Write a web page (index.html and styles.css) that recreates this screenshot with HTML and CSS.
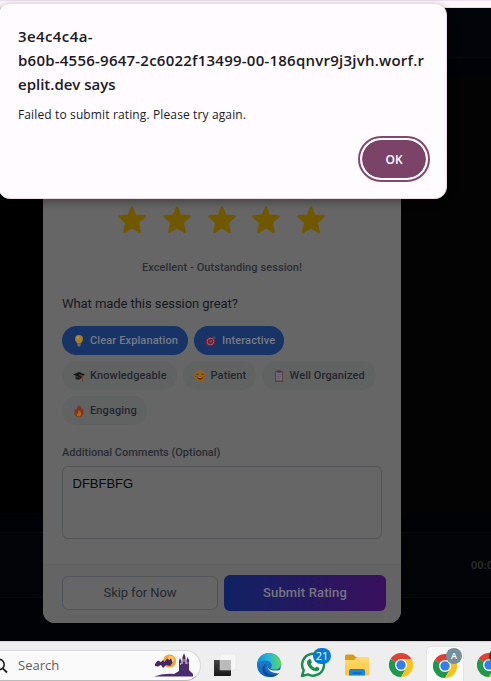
FILE: index.html
```html
<!DOCTYPE html>
<html lang="en">
<head>
<meta charset="utf-8">
<title>Session rating</title>
<link rel="stylesheet" href="styles.css">
</head>
<body>
<svg width="0" height="0" class="defs">
  <defs>
    <linearGradient id="edgeTop" x1="0" y1="0" x2="1" y2="0"><stop offset="0" stop-color="#168bd5"/><stop offset=".5" stop-color="#27b8dc"/><stop offset="1" stop-color="#60d850"/></linearGradient>
    <linearGradient id="edgeLow" x1="0" y1="0" x2="0" y2="1"><stop offset="0" stop-color="#1e88d8"/><stop offset="1" stop-color="#1261ba"/></linearGradient>
    <linearGradient id="folder" x1="0" y1="0" x2="0" y2="1"><stop offset="0" stop-color="#ffdb70"/><stop offset="1" stop-color="#fbc437"/></linearGradient>
    <linearGradient id="dark" x1="0" y1="0" x2="0" y2="1"><stop offset="0" stop-color="#444"/><stop offset="1" stop-color="#171917"/></linearGradient>
    <symbol id="star" viewBox="0 0 28 28"><path d="M14 1.600 17.200 9.800 26.400 10.400 19.500 16.500 21.600 25.700 14 21 6.400 25.700 8.500 16.500 1.600 10.400 10.800 9.800Z" fill="#705800" stroke="#705800" stroke-width="2.600" stroke-linejoin="round"/></symbol>
    <symbol id="chrome" viewBox="0 0 24 24">
      <path d="M12 12 1.600 6A12 12 0 0 1 22.400 6Z" fill="#df4034"/>
      <path d="M12 12 1.600 6A12 12 0 0 0 12 24L17.200 15Z" fill="#21974b"/>
      <path d="M12 6H22.400A12 12 0 0 1 12 24L17.200 15Z" fill="#fbc116"/>
      <circle cx="12" cy="12" r="6" fill="#fff"/><circle cx="12" cy="12" r="4.700" fill="#337ded"/>
    </symbol>
  </defs>
</svg>
<div class="desktop">
  <div class="browser-edge"></div>
  <main class="page">
    <div class="topbar"></div>
    <div class="subbar"></div>
    <div class="video"></div>
    <div class="video-foot"></div>
    <div class="controls"><span>00:00</span></div>
    <div class="page-foot"></div>
  </main>
  <footer class="taskbar">
    <div class="search">
      <svg class="glass" width="16" height="16" viewBox="0 0 16 16"><circle cx="6" cy="6.500" r="5.200" fill="none" stroke="#222" stroke-width="1.600"/><path d="M9.800 10.300 14 14.500" stroke="#222" stroke-width="1.900"/></svg>
      <span>Search</span>
      <svg class="castle" width="40" height="26" viewBox="0 0 40 26"><circle cx="15.500" cy="8" r="6.600" fill="#f5a536"/><circle cx="17" cy="6" r="3" fill="#ffc963"/><path d="M1 11 4 7.500 7 9 9 7 10.500 9 13 5.500 15.500 7 17 5 18.500 10 16 13 12 12 9 15 7 12 4 13.500 1 13Z" fill="#442765"/><path d="M0 23.500Q9 20 20 21L25 18V8L26 5 27.500 8V11H28.500V4L30 0 31.500 4V11H32.500V7L33.500 4 35 7V17L39 21V23.500Z" fill="#4a2b70"/><path d="M26 10h1v2h-1zM29.500 6h1v3h-1zM33.500 9h.8v2h-.8z" fill="#dfa9a1"/></svg>
    </div>
    <div class="slot"><svg width="24" height="24" viewBox="0 0 24 24"><path d="M1 7h17v15a1 1 0 0 1-1 1H1Z" fill="url(#dark)"/><path d="M7 1h16v15a1 1 0 0 1-1 1H7Z" fill="#f6f6f6" stroke="#ddd" stroke-width=".5"/><path d="M7 7h11v10H7Z" fill="#bbb"/></svg></div>
    <div class="slot"><svg width="24" height="24" viewBox="0 0 24 24"><circle cx="12" cy="12" r="12" fill="url(#edgeLow)"/><path d="M0 11C1 4 6 0 12 0c7 0 12 5 12 10.500 0 4-3 6-6.500 6-3 0-4-1-3.500-2 2-3 0-7-5-7C5 7.500 1 9 0 11Z" fill="url(#edgeTop)"/><path d="M9.500 11C5 15 9 22 17 21.500c2.500 0 4-1 5.500-2C19 25 12 25 8 21.500 4 18 5 12 9.500 11Z" fill="#104b98"/><path d="M11 11.500c-2 4 3 7.500 12 5.500l1 1-1.500 2C14 21 9 16 11 11.500Z" fill="#eee"/></svg></div>
    <div class="slot"><svg width="26" height="26" viewBox="0 0 26 26"><path d="M2 24 3.700 18.300A10.900 10.900 0 1 1 8 22.400Z" fill="#f8fbf8" stroke="#1d8c51" stroke-width="2.500" stroke-linejoin="round"/><path d="M8.500 7.500 10.500 7 12 10.300 10.700 12C11.700 14 13 15.200 15 16L16.500 14.500 19.500 16C19.500 19 17 19.500 15 19 10.500 18 7 13.500 7 10.500 7 9 7.700 8 8.500 7.500Z" fill="#1d8c51"/></svg><b class="count">21</b></div>
    <div class="slot"><svg width="24" height="22" viewBox="0 0 24 22"><path d="M0 2a1.500 1.500 0 0 1 1.500-1.500H8L11 3h11.500A1.500 1.500 0 0 1 24 4.500V10H0Z" fill="#d99a20"/><path d="M0 6H9L12 3h12v17a1.500 1.500 0 0 1-1.500 1.500h-21A1.500 1.500 0 0 1 0 20Z" fill="url(#folder)"/><path d="M4 21.500V17a2 2 0 0 1 2-2h12a2 2 0 0 1 2 2v4.500Z" fill="#1785d8"/><path d="M7.500 18.500h9v1.200h-9z" fill="#125da5"/></svg></div>
    <div class="slot"><svg width="24" height="24"><use href="#chrome"/></svg></div>
    <div class="slot active"><svg width="24" height="24"><use href="#chrome"/></svg><b class="profile">A</b></div>
    <div class="slot"><svg width="24" height="24"><use href="#chrome"/></svg><b class="profile brown"></b></div>
  </footer>
</div>

<section class="rating">
  <div class="rating-body">
    <div class="stars">
      <svg><use href="#star"/></svg><svg><use href="#star"/></svg><svg><use href="#star"/></svg><svg><use href="#star"/></svg><svg><use href="#star"/></svg>
    </div>
    <p class="verdict"><span>Excellent - Outstanding session!</span></p>
    <h3><span>What made this session great?</span></h3>
    <div class="tags">
      <div class="tag on w126"><svg viewBox="0 0 12 12"><path d="M4 8.500C4 7 2 6.500 2 4a4 4 0 0 1 8 0c0 2.500-2 3-2 4.500Z" fill="#a57c28"/><path d="M4 2.500Q5 1 6 2L5 5Z" fill="#b99c56"/><path d="M4.300 8.500h3.400v2.300L6 12 4.300 10.800Z" fill="#6c6b68"/></svg><span>Clear Explanation</span></div>
      <div class="tag on w90"><svg viewBox="0 0 12 12"><circle cx="5.500" cy="6.500" r="5" fill="#79192e"/><circle cx="5.500" cy="6.500" r="3.300" fill="none" stroke="#80717d" stroke-width="1"/><circle cx="5.500" cy="6.500" r="1" fill="#80717d"/><path d="M5.500 6.500 10 2M9 1v2h2" stroke="#245d78" fill="none"/></svg><span>Interactive</span></div>
      <div class="tag w114"><svg viewBox="0 0 12 12"><path d="M0 4.500 6 2l6 2.500-5 3Z" fill="#171519"/><path d="M2.500 6v3Q6 11 8.500 8V6L6.500 7.500Z" fill="#211d21"/><path d="M6 4.500 9.500 6v5.500" stroke="#70421f" stroke-width="1.200" fill="none"/></svg><span>Knowledgeable</span></div>
      <div class="tag w72"><svg viewBox="0 0 12 12"><circle cx="6" cy="6" r="5.700" fill="#956018"/><path d="M2.500 4.500q1-1 2 0M7.500 4.500q1-1 2 0" stroke="#3a2410" fill="none" stroke-width=".8"/><path d="M3 7h6Q8.500 9.500 6 9.500T3 7Z" fill="#4d2713"/><path d="M3.500 7h5L8 8H4Z" fill="#81756a"/><path d="M1 6.500h1.500M9.500 6.500H11" stroke="#823b22"/></svg><span>Patient</span></div>
      <div class="tag w114"><svg viewBox="0 0 12 12"><path d="M2 1h8v11H2Z" fill="#653a31"/><path d="M3 2.200h6v8.500H3Z" fill="#6f697a"/><path d="M4 .3h4v2.200H4Z" fill="#3d3d45"/><path d="M4 4.500h4M4 6.500h4M4 8.500h3" stroke="#555260" stroke-width=".5"/></svg><span>Well Organized</span></div>
      <div class="tag w85"><svg viewBox="0 0 12 12"><path d="M6 0Q9 2.500 8.500 5L10 3.500Q12 12 6 12T1.800 4L3.500 5.500Q3.500 2 6 0Z" fill="#85301d"/><path d="M6 5Q9 8 8 10 7 11.500 6 11.500 3 11 3.800 8.500L5 9Q4.500 7 6 5Z" fill="#a36b1b"/></svg><span>Engaging</span></div>
    </div>
    <label class="comments-label" for="comments"><span>Additional Comments (Optional)</span></label>
    <div class="comments" id="comments"><span>DFBFBFG</span></div>
  </div>
  <div class="actions">
    <button class="skip"><span>Skip for Now</span></button>
    <button class="submit"><span>Submit Rating</span></button>
  </div>
</section>

<section class="alert">
  <h2><span class="first">3e4c4c4a-</span><br><span class="host">b60b-4556-9647-2c6022f13499-00-186qnvr9j3jvh.worf.r</span><br>eplit.dev says</h2>
  <p>Failed to submit rating. Please try again.</p>
  <button class="ok">OK</button>
</section>
</body>
</html>
```
FILE: styles.css
```css
* { box-sizing: border-box; }
body { margin: 0; width: 491px; height: 681px; overflow: hidden; position: relative; font-family: Roboto, "Liberation Sans", sans-serif; background: #000; }
.defs { position: absolute; }
h2, h3, p { margin: 0; font-weight: inherit; }
button { padding: 0; font-family: inherit; }
span { white-space: nowrap; }

.desktop { display: flex; flex-direction: column; width: 491px; height: 681px; overflow: hidden; }
.browser-edge { height: 8px; flex: none; background: #fff8fb; border-top: 1px solid #eee1ed; border-bottom: 1px solid #eadde4; }
.page { flex: 1; display: flex; flex-direction: column; background: #010206; }
.topbar { height: 50px; background: #020409; border-bottom: 1px solid #06090f; }
.subbar { height: 19px; background: #010207; }
.video { height: 436px; background: linear-gradient(90deg, #000 50%, #030303 50%); }
.video-foot { height: 19px; background: #010206; }
.controls { height: 66px; background: #020408; border: solid #070a0e; border-width: 1px 0; display: flex; align-items: center; padding-left: 471px; color: #292a2d; font: bold 11px Roboto, sans-serif; overflow: hidden; }

.taskbar { height: 40px; flex: none; display: flex; background: #eee; border-top: 1px solid #d3d3d5; }
.search { flex: none; width: 203px; height: 31px; margin: 8px 2px 0 -2px; border: 1px solid #d8d8d8; border-bottom-color: #bbb; border-radius: 0 16px 16px 0; background: #fafafa; display: flex; align-items: center; font: 13px "Open Sans", sans-serif; color: #5d5d5d; }
.glass { margin-left: -6px; flex: none; }
.search span { margin: -2px 0 0 9px; }
.castle { margin-left: auto; margin-right: 6px; }
.slot { width: 44px; flex: none; display: flex; align-items: center; justify-content: center; position: relative; padding-top: 7px; }
.slot.active { width: 38px; margin: 4px 3px 0; padding-top: 3px; background: #fafafa; border: 1px solid #e3e3e3; border-bottom: 0; border-radius: 5px 5px 0 0; }
.count { position: absolute; left: 22px; top: 6px; width: 18px; height: 16px; border-radius: 8px; background: #0878d1; color: #fff; font: 11px/16px "Open Sans", sans-serif; text-align: center; }
.profile { position: absolute; left: 19px; top: 1px; width: 16px; height: 16px; border-radius: 50%; background: #74909d; color: #fff; font: 600 9px/16px "Open Sans", sans-serif; text-align: center; }
.profile.brown { left: 22px; top: 6px; background: #3d2c27; }

.rating { position: absolute; left: 43px; top: 150px; width: 358px; height: 473px; border-radius: 12px; background: #666; overflow: hidden; color: #25272d; display: flex; flex-direction: column; }
.rating-body { height: 414px; padding: 56px 19px 0; }
.stars { display: flex; gap: 16.8px; padding-left: 56px; height: 29px; }
.stars svg { width: 28px; height: 28px; flex: none; }
.verdict { margin-top: 26px; height: 14px; text-align: center; font-weight: 500; font-size: 11px; line-height: 14px; letter-spacing: .08px; color: #2b2e35; }
h3 { margin-top: 20px; height: 18px; font-size: 13px; line-height: 18px; letter-spacing: -.06px; color: #17191f; }
.tags { margin-top: 13px; display: flex; flex-wrap: wrap; gap: 6px; }
.tag { height: 29px; border-radius: 15px; background: #616363; display: flex; align-items: center; padding-left: 11px; gap: 5px; font-weight: 500; font-size: 11px; line-height: 29px; letter-spacing: .12px; color: #24262c; }
.tag.on { background: #183466; color: #777c85; }
.tag svg { width: 12px; height: 12px; flex: none; }
.w126 { width: 126px; } .w90 { width: 90px; } .w114 { width: 114.500px; } .w72 { width: 73px; } .w85 { width: 85px; }
.comments-label { display: block; margin-top: 20px; height: 16px; font-weight: 500; font-size: 11px; line-height: 16px; color: #292c32; }
.comments { margin-top: 5px; width: 320px; height: 73px; border: 1px solid #535559; border-radius: 6px; padding: 8px 9.500px; font: 13px/17px "Liberation Sans", sans-serif; color: #08090b; }
.actions { height: 59px; background: #646464; border-top: 1px solid #616263; padding: 10px 15px 0 19px; display: flex; gap: 6px; }
.actions button { font-size: 13px; }
.skip { width: 156px; height: 34px; margin-top: 1px; border: 1px solid #535559; border-radius: 6px; background: #666; color: #25292f; letter-spacing: -.1px; }
.actions .submit { width: 162px; height: 36px; border: 0; border-radius: 6px; background: linear-gradient(90deg, #0f2263, #3a105d); color: #777580; font-weight: 500; letter-spacing: .15px; padding-bottom: 1px; }
.skip { padding-bottom: 1px; }

.alert { position: absolute; left: -2px; top: 3px; width: 449px; height: 196px; border: 1px solid #e9dce4; border-radius: 12px; background: #fffbff; box-shadow: 0 3px 8px rgba(0,0,0,.35); padding: 20px 18px 0 19px; color: #201a1e; display: flex; flex-direction: column; }
.alert h2 { font: 600 15px/24px "Open Sans", sans-serif; height: 72px; }
.first { letter-spacing: .4px; }
.host { letter-spacing: .23px; }
.alert p { margin-top: 10px; font: 12px/18px "Open Sans", sans-serif; letter-spacing: .13px; }
.ok { align-self: flex-end; margin: 14px 0 0; width: 68px; height: 42px; border: 2px solid #fff; outline: 2px solid #824872; border-radius: 21px; background: #7b4367; background-clip: padding-box; color: #fff; font: 600 12px "Open Sans", sans-serif; }
```
